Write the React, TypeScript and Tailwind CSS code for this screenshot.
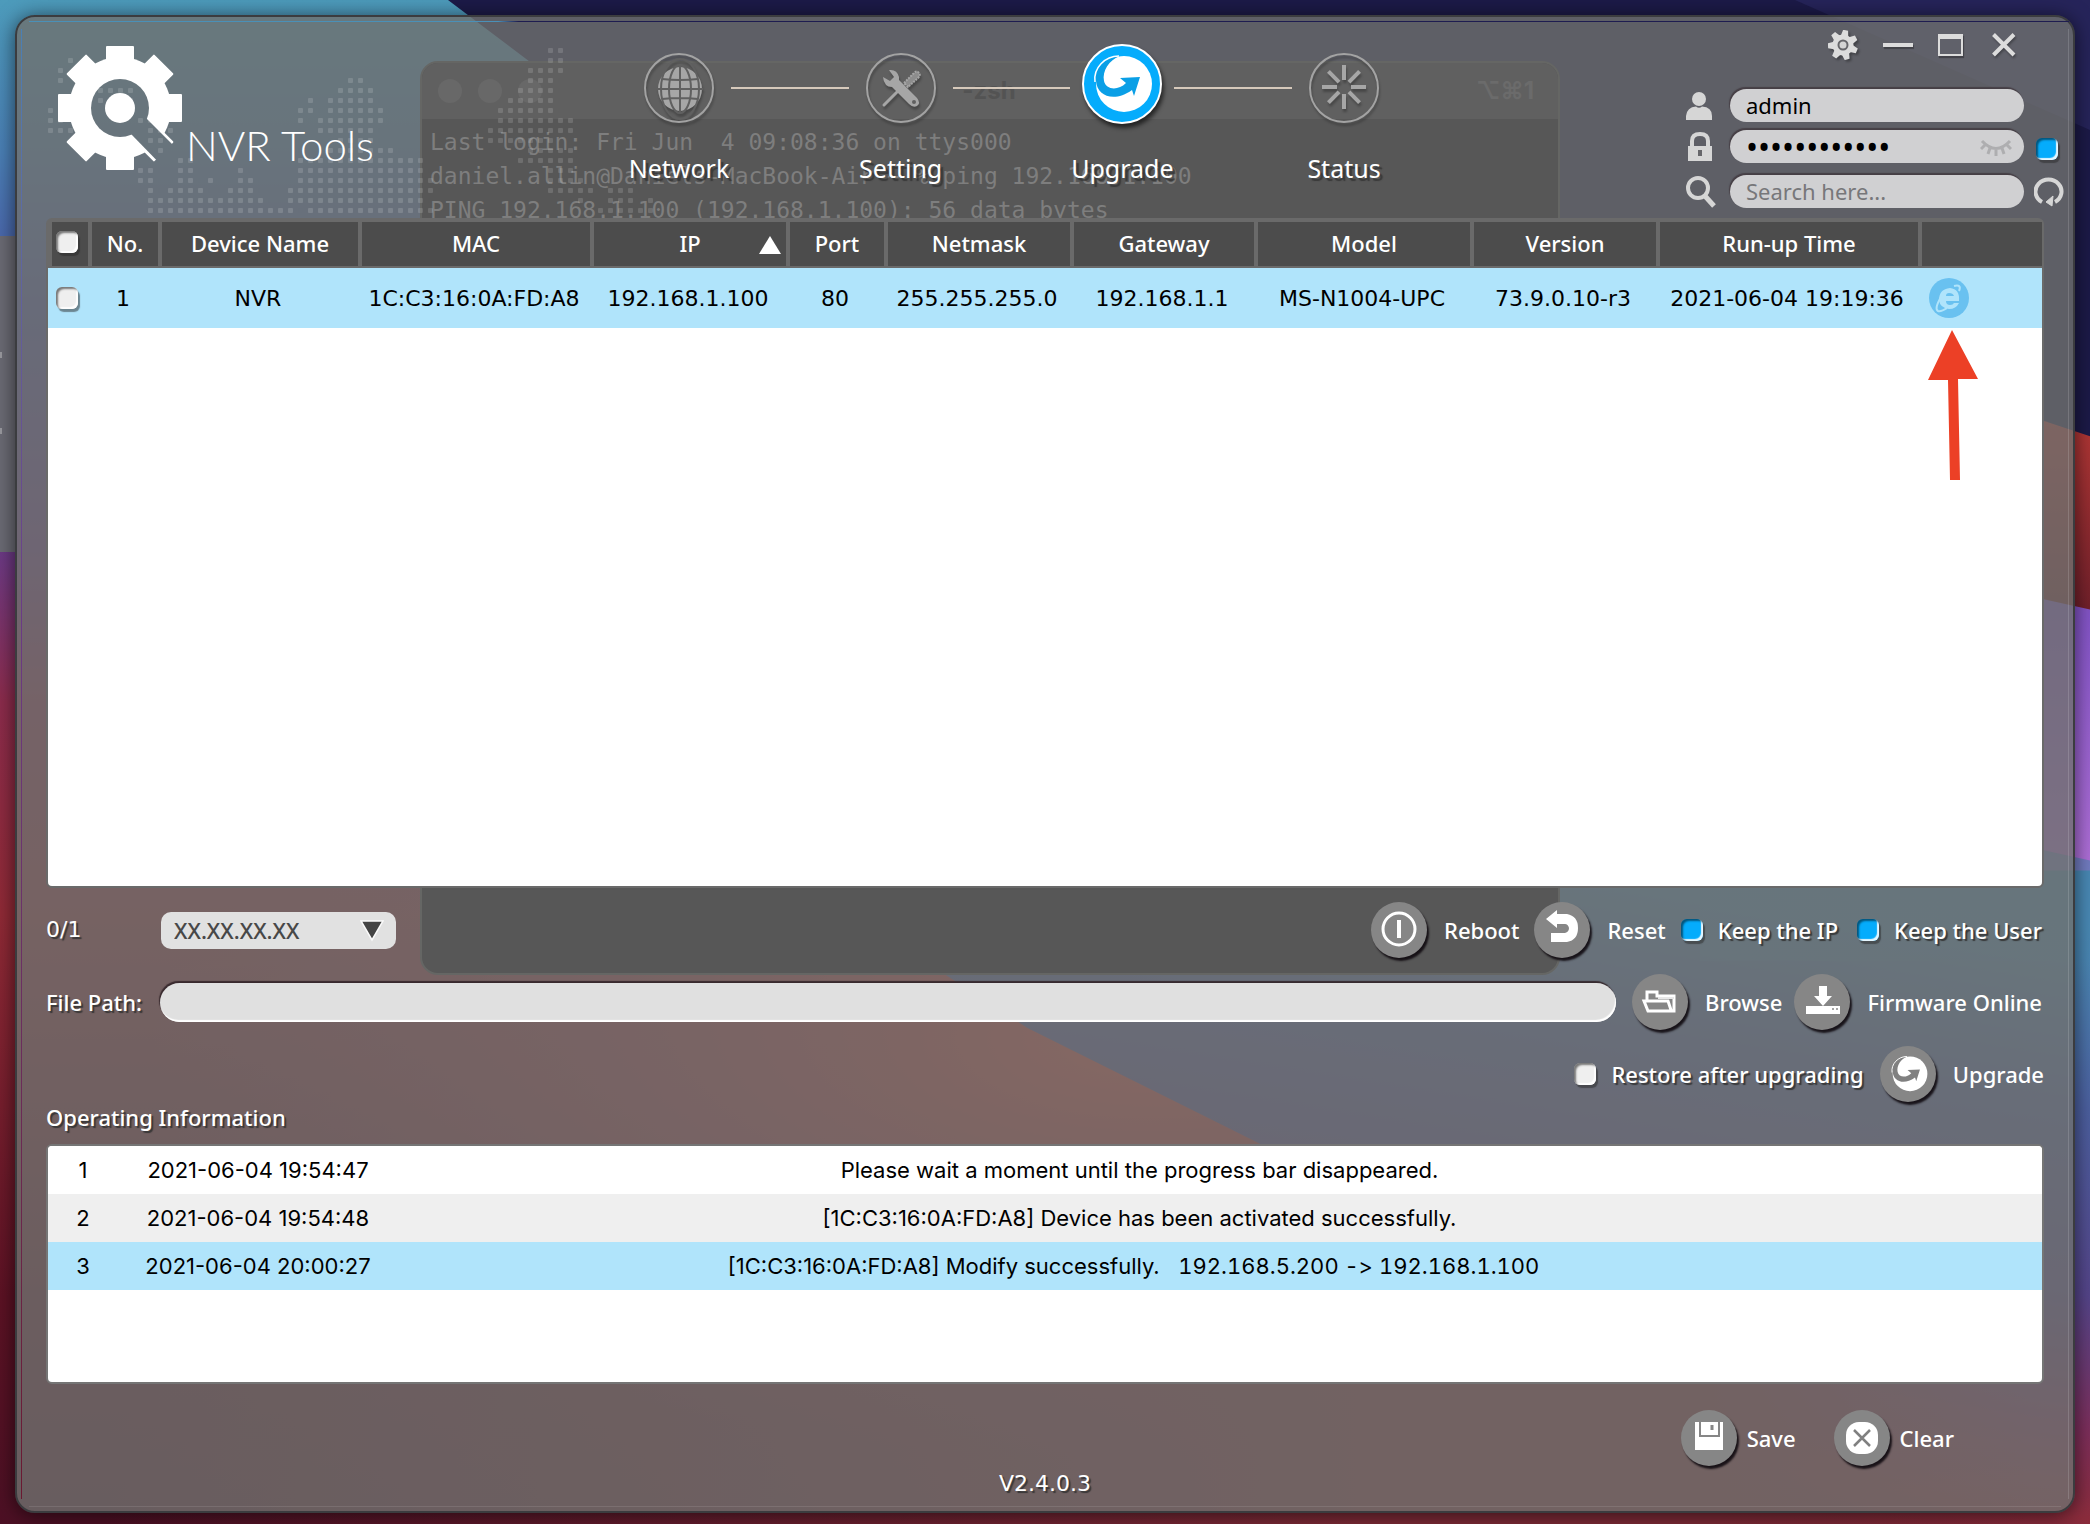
import { useState } from 'react';
import type { ReactNode } from 'react';

const devices = [
  {
    no: 1,
    name: 'NVR',
    mac: '1C:C3:16:0A:FD:A8',
    ip: '192.168.1.100',
    port: 80,
    netmask: '255.255.255.0',
    gateway: '192.168.1.1',
    model: 'MS-N1004-UPC',
    version: '73.9.0.10-r3',
    runup: '2021-06-04 19:19:36',
  },
];

const logs = [
  { no: 1, time: '2021-06-04 19:54:47', text: 'Please wait a moment until the progress bar disappeared.' },
  { no: 2, time: '2021-06-04 19:54:48', text: '[1C:C3:16:0A:FD:A8] Device has been activated successfully.' },
  { no: 3, time: '2021-06-04 20:00:27', text: '[1C:C3:16:0A:FD:A8] Modify successfully.   ', change: '192.168.5.200 -> 192.168.1.100  ' },
];

// world map dots: [row, first column, last column]
const mapDots = [
  [0, 55, 56], [1, 7, 7], [1, 55, 56], [2, 6, 6], [2, 53, 56],
  [3, 6, 6], [3, 35, 36], [3, 53, 55], [4, 34, 37], [4, 52, 55], [4, 10, 13],
  [5, 31, 31], [5, 33, 37], [5, 51, 55], [5, 10, 10], [5, 12, 13],
  [6, 5, 6], [6, 30, 31], [6, 33, 38], [6, 50, 55],
  [7, 5, 6], [7, 14, 15], [7, 30, 30], [7, 32, 38], [7, 50, 57],
  [8, 5, 7], [8, 15, 17], [8, 32, 37], [8, 49, 57],
  [9, 15, 16], [9, 34, 37], [9, 49, 55], [10, 14, 14], [10, 16, 16], [10, 33, 39], [10, 53, 57],
  [11, 18, 19], [11, 30, 42], [11, 52, 57],
  [12, 14, 15], [12, 18, 19], [12, 24, 24], [12, 30, 42], [12, 55, 57],
  [13, 14, 15], [13, 18, 19], [13, 21, 21], [13, 24, 25], [13, 30, 43], [13, 55, 58],
  [14, 15, 15], [14, 17, 20], [14, 23, 25], [14, 29, 43], [14, 55, 59], [14, 61, 63],
  [15, 15, 26], [15, 29, 42], [15, 58, 58], [15, 61, 63], [15, 65, 65],
  [16, 15, 29], [16, 31, 43], [16, 60, 65],
  [17, 12, 13], [17, 15, 26], [17, 29, 42], [17, 61, 65],
];

function Wallpaper() {
  return (
    <svg className="absolute inset-0 w-full h-full" viewBox="0 0 2090 1524" preserveAspectRatio="none" aria-hidden="true">
      <defs>
        <linearGradient id="wpLeft" x1="0" y1="0" x2="0" y2="1">
          <stop offset="0" stopColor="#4d9bbb" />
          <stop offset=".1" stopColor="#4a7fb5" />
          <stop offset=".2" stopColor="#4a56a4" />
          <stop offset=".36" stopColor="#6b3a86" />
          <stop offset=".46" stopColor="#8c2c4c" />
          <stop offset=".6" stopColor="#902a36" />
          <stop offset=".85" stopColor="#5c1224" />
          <stop offset="1" stopColor="#4c1024" />
        </linearGradient>
        <radialGradient id="wpGlow" gradientUnits="userSpaceOnUse" cx="0" cy="0" r="1" gradientTransform="translate(1150 1040) scale(1000 420)">
          <stop offset="0" stopColor="#dd4436" />
          <stop offset=".5" stopColor="#a83844" stopOpacity=".7" />
          <stop offset="1" stopColor="#963048" stopOpacity="0" />
        </radialGradient>
        <linearGradient id="wpBand" x1=".6" y1="0" x2=".3" y2="1">
          <stop offset="0" stopColor="#4a90b8" />
          <stop offset=".25" stopColor="#4c60a0" />
          <stop offset=".5" stopColor="#55458a" />
          <stop offset=".68" stopColor="#7d2f5c" />
          <stop offset=".8" stopColor="#8b2c3c" />
          <stop offset="1" stopColor="#5c1a28" />
        </linearGradient>
        <linearGradient id="wpFloor" x1="0" y1="0" x2="1" y2="0">
          <stop offset=".05" stopColor="#7c2a36" stopOpacity="0" />
          <stop offset=".65" stopColor="#7c2a36" />
          <stop offset=".82" stopColor="#7c2a36" />
          <stop offset=".97" stopColor="#7c2a36" stopOpacity="0" />
        </linearGradient>
        <linearGradient id="wpRed" x1="0" y1="0" x2="0" y2="1">
          <stop offset="0" stopColor="#f04c40" />
          <stop offset="1" stopColor="#6d1f2a" />
        </linearGradient>
        <linearGradient id="wpViolet" x1="0" y1="0" x2="0" y2="1">
          <stop offset="0" stopColor="#8550b4" />
          <stop offset=".35" stopColor="#8455c8" />
          <stop offset="1" stopColor="#b070d8" />
        </linearGradient>
      </defs>
      <rect width="2090" height="1524" fill="url(#wpLeft)" />
      <rect width="2090" height="1524" fill="url(#wpGlow)" />
      <path d="M800 880L1027 1027L1260 1143L1700 1524H2090V840H1900Z" fill="url(#wpBand)" />
      <rect y="1300" width="2090" height="224" fill="url(#wpFloor)" />
      <path d="M448 0L640 145V600H2090V0Z" fill="#1c1a48" />
      <path d="M1795 0L2090 130V0Z" fill="#26245a" />
      <path d="M1400 250L2045 421L2090 436V620H1400Z" fill="url(#wpRed)" />
      <path d="M1400 480L2045 599L2090 609V870H1400Z" fill="url(#wpViolet)" />
      <path d="M1700 790L2045 850L2090 860V960H1700Z" fill="#4a86b2" opacity=".6" />
    </svg>
  );
}

function TerminalWindow() {
  return (
    <div className="absolute left-[403px] top-11 w-[1140px] h-[914px] rounded-[18px] border-2 border-[#656664] bg-[#575757] overflow-hidden">
      <div className="relative flex items-center h-14 bg-[#606060] pl-4 pr-6 gap-4">
        <span className="size-6 rounded-full bg-[#686868]" />
        <span className="size-6 rounded-full bg-[#686868]" />
        <span className="size-6 rounded-full bg-[#686868]" />
        <span className="flex-1 text-center font-['Inter'] font-bold text-[24px] text-[#535353] pr-10">-zsh</span>
        <span className="font-['Inter','DejaVu_Sans',sans-serif] font-bold text-[24px] text-[#6b6b6b]">⌥⌘1</span>
      </div>
      <pre className="px-2 pt-1.5 font-['DejaVu_Sans_Mono',monospace] text-[23px] leading-[34px] text-[#7e7e7e]">
{`Last login: Fri Jun  4 09:08:36 on ttys000
daniel.allin@Daniels-MacBook-Air ~ % ping 192.168.1.100
PING 192.168.1.100 (192.168.1.100): 56 data bytes`}
      </pre>
    </div>
  );
}

function WorldMap() {
  return (
    <svg className="absolute left-0 top-0 w-[700px] h-[201px]" viewBox="17 17 700 201" aria-hidden="true">
      {mapDots.map(([row, from, to]) =>
        Array.from({ length: to - from + 1 }, (_, i) => (
          <rect key={`${row}-${from + i}`} x={(from + i) * 10 - 2} y={row * 10 + 48} width="5" height="5" rx="1" fill="#fff" opacity=".14" />
        ))
      )}
    </svg>
  );
}

function Logo() {
  return (
    <svg className="w-[124px] h-[124px] shrink-0" viewBox="-62 -62 124 124" aria-hidden="true">
      <mask id="lens">
        <rect x="-62" y="-62" width="124" height="124" fill="#fff" />
        <path d="M26 10L66 50L50 66L11 26Z" fill="#000" />
        <circle r="29" fill="#000" />
        <circle r="15" fill="#fff" />
      </mask>
      <g fill="#fff" mask="url(#lens)">
        <circle r="51" />
        {[0, 45, 90, 135, 180, 225, 270, 315].map((a) => (
          <rect key={a} x="-14" y="-62" width="28" height="30" rx="1" transform={`rotate(${a})`} />
        ))}
      </g>
    </svg>
  );
}

function Swirl({ color }: { color: string }) {
  return (
    <g>
      <circle cx="42" cy="40" r="28" fill="#fff" />
      <path d="M38 12C22 14 13 24 14 37C15 52 32 59 50 46L52 52L58 33L38 34L44 39C36 47 24 46 22 37C20 27 27 16 38 12Z" fill={color} />
      <path d="M37 12C23 12 11 24 13 38" fill="none" stroke="#fff" strokeWidth="1.5" />
    </g>
  );
}

function NavCircle({ children }: { children: ReactNode }) {
  return (
    <svg className="size-20 overflow-visible drop-shadow-[1px_3px_1px_rgba(0,0,0,0.25)]" viewBox="0 0 80 80" aria-hidden="true">
      <circle cx="40" cy="44" r="34" fill="none" stroke="#a3a3a3" strokeWidth="2" />
      {children}
    </svg>
  );
}

function GlobeIcon() {
  return (
    <NavCircle>
      <circle cx="41" cy="45" r="22" fill="#a6a6a6" />
      <g fill="none" stroke="#606060" strokeWidth="2">
        <path d="M18 45H64M41 22V68M23 35Q41 37 59 35M23 55Q41 53 59 55" />
        <ellipse cx="41" cy="45" rx="11" ry="24" />
        <ellipse cx="41" cy="45" rx="19" ry="30" />
      </g>
    </NavCircle>
  );
}

function ToolsIcon() {
  return (
    <NavCircle>
      <g transform="translate(0 2)">
        <path d="M23 59L40 42" stroke="#a6a6a6" strokeWidth="3" strokeLinecap="round" />
        <path d="M43 37L53 27Q56 24 58 27Q60 29 57 32L47 41Z" fill="#8d8d8d" stroke="#a6a6a6" strokeWidth="2" strokeDasharray="2 1" />
        <path d="M22 31L29 35L33 31L28 24Q36 23 38 31L38 34L56 52Q60 57 56 60Q52 62 48 58L31 41Q23 41 22 31Z" fill="#a6a6a6" />
        <circle cx="53" cy="56" r="2" fill="#606060" />
      </g>
    </NavCircle>
  );
}

function UpgradeIcon() {
  return (
    <svg className="size-20 overflow-visible drop-shadow-[2px_4px_2px_rgba(0,0,0,0.6)]" viewBox="0 0 80 80" aria-hidden="true">
      <circle cx="40" cy="40" r="39" fill="#05acfc" stroke="#fff" strokeWidth="2" />
      <Swirl color="#0a9fe6" />
    </svg>
  );
}

function StatusIcon() {
  return (
    <NavCircle>
      <g stroke="#a6a6a6" strokeWidth="4">
        {[0, 45, 90, 135, 180, 225, 270, 315].map((a) => (
          <path key={a} d="M40 36V21" transform={`rotate(${a} 40 43)`} />
        ))}
      </g>
    </NavCircle>
  );
}

const navItems = [
  { label: 'Network', icon: <GlobeIcon /> },
  { label: 'Setting', icon: <ToolsIcon /> },
  { label: 'Upgrade', icon: <UpgradeIcon /> },
  { label: 'Status', icon: <StatusIcon /> },
];

function Nav() {
  return (
    <nav className="flex justify-between pt-[27px]">
      {navItems.map((item, i) => (
        <div key={item.label} className={i < 3 ? 'flex flex-1' : 'flex'}>
          <button className="flex flex-col items-center w-[104px] shrink-0 text-white text-[25px] leading-8 [text-shadow:3px_3px_1px_rgba(50,50,50,0.8)]">
            {item.icon}
            <span className="mt-7">{item.label}</span>
          </button>
          {i < 3 && <span className="flex-1 h-0.5 mt-[43px] bg-[#d6c9bb]" />}
        </div>
      ))}
    </nav>
  );
}

const fieldClass =
  'w-full h-[33px] rounded-full bg-[#d0d0d2] px-4 text-black placeholder:text-[#77777a] outline-none shadow-[-1px_-2px_1px_rgba(60,50,55,0.7)]';

function HeaderTools() {
  return (
    <div className="justify-self-end w-[378px] pt-[13px]">
      <div className="flex items-center h-[30px] pl-[142px] gap-[25px] text-[#dcdcdc]">
        <button aria-label="Settings">
          <svg className="size-[30px] drop-shadow-[2px_2px_1px_rgba(0,0,0,0.3)]" viewBox="-15 -15 30 30" fill="currentColor">
            {[10, 61, 113, 164, 216, 267, 319].map((a) => (
              <path key={a} d="M-4 -8L-2.500 -15H2.500L4 -8Z" transform={`rotate(${a})`} />
            ))}
            <circle r="10.500" />
            <circle r="4.500" fill="#d4d4d4" stroke="#66666a" strokeWidth="2" />
          </svg>
        </button>
        <button aria-label="Minimize" className="w-[30px] h-1 bg-[#dcdcdc] shadow-[1px_2px_1px_rgba(0,0,0,0.3)]" />
        <button aria-label="Maximize" className="w-[25px] h-[22px] border-2 border-t-[5px] border-[#dcdcdc] shadow-[1px_2px_1px_rgba(0,0,0,0.3)]" />
        <button aria-label="Close" className="ml-1">
          <svg className="size-6 drop-shadow-[1px_2px_1px_rgba(0,0,0,0.3)]" viewBox="0 0 24 24" fill="none" stroke="currentColor" strokeWidth="4">
            <path d="M1.500 1.500L22 22M22 1.500L1.500 22" />
          </svg>
        </button>
      </div>
      <div className="mt-[29px] grid grid-cols-[44px_294px_30px] gap-y-2 items-center">
        <label htmlFor="user" aria-label="User name">
          <svg className="w-7 h-[30px]" viewBox="0 0 28 30" fill="#d6d6d6">
            <circle cx="13" cy="8" r="7" />
            <path d="M0 29V25Q1 16 10 15.500Q13 18 16 15.500Q26 16 26 25V29Z" />
          </svg>
        </label>
        <input id="user" className={`${fieldClass} text-[22px]`} defaultValue="admin" />
        <span />
        <label htmlFor="password" aria-label="Password">
          <svg className="w-7 h-[30px]" viewBox="0 0 28 30">
            <path d="M6 15V9Q6 2 14 2Q22 2 22 9V15" fill="none" stroke="#d6d6d6" strokeWidth="4" />
            <path d="M2 14H26V29H2Z" fill="#d6d6d6" />
            <path d="M12 18H16V24H12Z" fill="#66666a" />
          </svg>
        </label>
        <div className="relative">
          <input id="password" type="password" className={`${fieldClass} block text-[32px]`} defaultValue="abcdefghijkl" />
          <button aria-label="Show password" className="absolute right-3 top-2">
            <svg className="w-8 h-5" viewBox="0 0 32 20" fill="none" stroke="#aeaeb0" strokeWidth="3">
              <path d="M2 3Q16 18 30 3M16 11V18M10 10L8 16M22 10L24 16M5 7L1 11M27 7L31 11" />
            </svg>
          </button>
        </div>
        <div className="pl-3 pt-1">
          <Tick label="Use password" on />
        </div>
        <label htmlFor="search" aria-label="Search" className="mt-1">
          <svg className="w-[30px] h-8" viewBox="0 0 30 32" fill="none" stroke="#d6d6d6">
            <circle cx="12" cy="12" r="10" strokeWidth="4" />
            <path d="M19 20L28 30" strokeWidth="5" />
          </svg>
        </label>
        <div className="mt-1">
          <input id="search" placeholder="Search here..." className={`${fieldClass} block text-[22px]`} />
        </div>
        <button aria-label="Refresh" className="mt-1 ml-[10px]">
          <svg className="size-[30px]" viewBox="0 0 30 30" fill="none" stroke="#d6d6d6" strokeWidth="4">
            <path d="M8 25A13 12 0 1 1 21 25" />
            <path d="M19 19L12 25L18 29Z" fill="#d6d6d6" strokeWidth="1" />
          </svg>
        </button>
      </div>
    </div>
  );
}

function Tick({ label, on = false, id }: { label?: string; on?: boolean; id?: string }) {
  const [checked, setChecked] = useState(on);
  return (
    <input
      id={id}
      type="checkbox"
      aria-label={label}
      checked={checked}
      onChange={() => setChecked(!checked)}
      className="block appearance-none size-[22px] shrink-0 rounded-[6px] bg-[#efefef] checked:bg-[#05acfc] shadow-[inset_2px_2px_2px_rgba(0,0,0,0.5),inset_-2px_-2px_1px_rgba(255,255,255,0.9),2px_3px_1px_rgba(40,40,40,0.5)]"
    />
  );
}

function RoundButton({ label, tight = false, children }: { label: string; tight?: boolean; children: ReactNode }) {
  return (
    <button className={tight ? 'flex items-center gap-[10px]' : 'flex items-center gap-[17px]'}>
      <svg className="size-14 rounded-full bg-[#868686] shadow-[2px_3px_2px_rgba(15,10,15,0.9)]" viewBox="0 0 56 56" aria-hidden="true">
        {children}
      </svg>
      {label}
    </button>
  );
}

const columns = [
  { label: 'No.', width: 'w-[70px]' },
  { label: 'Device Name', width: 'w-[200px]' },
  { label: 'MAC', width: 'w-[232px]' },
  { label: 'IP', width: 'w-[196px]' },
  { label: 'Port', width: 'w-[98px]' },
  { label: 'Netmask', width: 'w-[186px]' },
  { label: 'Gateway', width: 'w-[184px]' },
  { label: 'Model', width: 'w-[216px]' },
  { label: 'Version', width: 'w-[186px]' },
  { label: 'Run-up Time', width: 'w-[262px]' },
];

function DeviceTable() {
  return (
    <div className="relative flex-1 min-h-[670px] rounded-md border-2 border-[#6a6a6a] bg-white">
      <table className="w-full table-fixed border-separate border-spacing-0 text-center text-[22px]">
        <thead>
          <tr className="h-12 bg-[#4c4c4c] text-white">
            <th className="w-11 border-y-2 border-x-4 border-[#6a6a6a]">
              <div className="pl-1 pb-1"><Tick label="Select all" /></div>
            </th>
            {columns.map((c) => (
              <th key={c.label} className={`${c.width} relative border-y-2 border-r-4 border-[#6a6a6a] pb-0.5 font-medium`}>
                {c.label}
                {c.label === 'IP' && (
                  <svg className="absolute right-1 top-3 w-6 h-[22px]" viewBox="0 0 24 22" aria-hidden="true">
                    <path d="M12 2L23 20H1Z" fill="#fff" />
                  </svg>
                )}
              </th>
            ))}
            <th className="border-y-2 border-[#6a6a6a]" />
          </tr>
        </thead>
        <tbody className="font-['DejaVu_Sans',sans-serif]">
          {devices.map((d) => (
            <tr key={d.no} className="h-[60px] bg-[#b0e4fb] text-black">
              <td className="pl-2"><Tick label="Select device" /></td>
              {[d.no, d.name, d.mac, d.ip, d.port, d.netmask, d.gateway, d.model, d.version, d.runup].map((value, i) => (
                <td key={columns[i].label} className="pr-2 pt-0.5">{value}</td>
              ))}
              <td className="relative text-left pl-[7px]">
                <button aria-label="Open in browser" className="block">
                  <svg className="size-10" viewBox="0 0 40 40">
                    <circle cx="20" cy="20" r="20" fill="#69c1f0" />
                    <path d="M30 23H17Q17 27 21 27Q24 27 25 25H30Q27 31 20 31Q11 30 10 22Q10 11 21 10Q31 11 30 23ZM17 18H25Q24 15 20 15Q17 15 17 18Z" fill="#b0e4fb" />
                    <path d="M30 13Q33 6 25 8M12 19Q5 31 9 33Q12 34 18 30" fill="none" stroke="#b0e4fb" strokeWidth="2" />
                  </svg>
                </button>
                <svg className="absolute left-1.5 top-[62px] w-[51px] h-[151px]" viewBox="0 0 51 151" aria-hidden="true">
                  <path d="M24 0L50 49H30L32 150H22L20 50H0Z" fill="#ec4026" />
                </svg>
              </td>
            </tr>
          ))}
        </tbody>
      </table>
    </div>
  );
}

function LogTable() {
  return (
    <div className="min-h-60 rounded-md border-2 border-[#757575] bg-white overflow-hidden">
      <table className="w-full table-fixed text-center font-['Inter',sans-serif] text-[22px] text-black">
        <tbody>
          {logs.map((l) => (
            <tr key={l.no} className="h-12 bg-white even:bg-[#efefef] last:bg-[#b0e4fb]">
              <td className="w-[70px]">{l.no}</td>
              <td className="w-[280px]">{l.time}</td>
              <td className="whitespace-pre">
                {l.text}
                {l.change && <span className="tabular-nums [font-feature-settings:'calt'_0]">{l.change}</span>}
              </td>
              <td className="w-[161px]" />
            </tr>
          ))}
        </tbody>
      </table>
    </div>
  );
}

export default function App() {
  return (
    <div className="relative min-h-screen flex flex-col overflow-hidden px-[15px] pt-[15px] pb-3 font-['Noto_Sans',sans-serif]">
      <Wallpaper />
      <div className="absolute left-0 top-[236px] w-[15px] h-[316px] bg-[#6b6b74]">
        <span className="absolute left-0 top-[116px] w-0.5 h-1.5 bg-[#9a9aa0]" />
        <span className="absolute left-0 top-[192px] w-0.5 h-1.5 bg-[#9a9aa0]" />
      </div>
      <div className="relative flex-1 flex flex-col rounded-[20px] border-2 border-[#3b3c3f] bg-[rgba(111,112,110,0.8)] shadow-[0_2px_20px_rgba(0,0,0,0.6)]">
        <div className="absolute left-3 right-1 top-1 h-px bg-linear-to-r from-[#4a90b8] from-23% to-[#1e1c50] to-24%" />
        <div className="absolute left-1 top-3 bottom-3 w-px bg-linear-to-b from-[#4a80b5] via-[#6b3a86] via-40% to-[#6a1830]" />
        <div className="absolute right-1 top-3 bottom-3 w-px bg-white/15" />
        <div className="absolute inset-x-3 bottom-1 h-px bg-white/10" />
        <TerminalWindow />
        <WorldMap />

        <header className="relative grid grid-cols-[583px_784px_1fr] pr-[9px] pb-[10px]">
          <div className="flex items-start pl-[41px] pt-[29px]">
            <Logo />
            <h1 className="mt-[74px] ml-1 font-['Lato'] font-light text-[42px] leading-[50px] text-white whitespace-nowrap">NVR Tools</h1>
          </div>
          <div className="pl-[27px] -mr-3">
            <Nav />
          </div>
          <HeaderTools />
        </header>

        <main className="relative flex-1 flex flex-col px-[29px] pb-3 text-white text-[22px] leading-[30px]">
          <DeviceTable />

          <div className="flex flex-col gap-4 pt-[14px] font-medium [text-shadow:2px_2px_1px_rgba(50,50,50,0.9)]">
            <div className="flex items-center h-14 pr-0.5">
              <span className="w-[115px] font-['DejaVu_Sans'] font-normal">0/1</span>
              <div className="relative w-[235px]">
                <select aria-label="Firmware version" className="appearance-none w-full h-[37px] rounded-[10px] bg-[#e1e1e1] px-[13px] text-[22px] text-[#484848] outline-none">
                  <option>XX.XX.XX.XX</option>
                </select>
                <svg className="absolute right-3 top-2 w-6 h-[22px] pointer-events-none" viewBox="0 0 24 22" aria-hidden="true">
                  <path d="M1 1H23L12 20Z" fill="#444" stroke="#fafafa" strokeWidth="1.500" />
                </svg>
              </div>
              <div className="ml-auto flex items-center gap-[15px]">
                <RoundButton label="Reboot">
                  <circle cx="28" cy="27" r="16" fill="none" stroke="#fff" strokeWidth="3" />
                  <path d="M28 18V36" stroke="#fff" strokeWidth="4" />
                </RoundButton>
                <RoundButton label="Reset">
                  <path d="M12 17L23 8V12H33Q44 14 44 26Q44 38 33 40H17V31H31Q35 30 35 26Q34 22 31 22H23V26Z" fill="#fff" />
                </RoundButton>
                <label className="flex items-center gap-[15px]"><Tick on />Keep the IP</label>
                <label className="flex items-center gap-[15px] pl-1"><Tick on />Keep the User</label>
              </div>
            </div>

            <div className="flex items-center h-14 pr-0.5">
              <label htmlFor="path" className="w-[114px]">File Path:</label>
              <input id="path" className="flex-1 h-[39px] rounded-full bg-[#e0e0e0] px-4 text-black outline-none shadow-[-1px_-2px_1px_rgba(50,35,40,0.9),inset_-1px_-2px_1px_#fff]" />
              <div className="flex items-center gap-3 pl-4">
                <RoundButton label="Browse">
                  <path d="M15 26V18H25V22H42V37H16L12 27H36L39 36" fill="none" stroke="#fff" strokeWidth="3" />
                  <path d="M26 24H42" stroke="#e8e8e8" strokeWidth="2" />
                </RoundButton>
                <RoundButton label="Firmware Online">
                  <path d="M25 12H33V22H38L29 32L20 22H25Z" fill="#fff" />
                  <path d="M12 32H46V40H12Z" fill="#fff" />
                  <path d="M39 34V36M43 34V36" stroke="#868686" strokeWidth="1.500" />
                </RoundButton>
              </div>
            </div>

            <div className="flex items-center justify-end h-14 gap-4">
              <label className="flex items-center gap-[15px]"><Tick />Restore after upgrading</label>
              <RoundButton label="Upgrade">
                <g transform="translate(4 3) scale(.62)">
                  <Swirl color="#808080" />
                </g>
              </RoundButton>
            </div>
          </div>

          <h2 className="mb-3 font-medium [text-shadow:2px_2px_1px_rgba(50,50,50,0.9)]">Operating Information</h2>
          <LogTable />

          <div className="flex justify-end gap-[38px] pt-[26px] pr-[90px] font-medium [text-shadow:2px_2px_1px_rgba(50,50,50,0.9)]">
            <RoundButton label="Save" tight>
              <path d="M14 12H42V40H14Z" fill="#fff" />
              <path d="M19 12V26H38V12" fill="none" stroke="#868686" strokeWidth="2" />
              <path d="M31 15V20" stroke="#868686" strokeWidth="3" />
            </RoundButton>
            <RoundButton label="Clear" tight>
              <rect x="12" y="12" width="32" height="32" rx="13" fill="#fff" />
              <path d="M20 20L36 36M36 20L20 36" stroke="#808080" strokeWidth="2.500" />
            </RoundButton>
          </div>
          <p className="mt-[3px] text-center font-['DejaVu_Sans'] [text-shadow:2px_2px_1px_rgba(50,50,50,0.9)]">V2.4.0.3</p>
        </main>
      </div>
    </div>
  );
}
